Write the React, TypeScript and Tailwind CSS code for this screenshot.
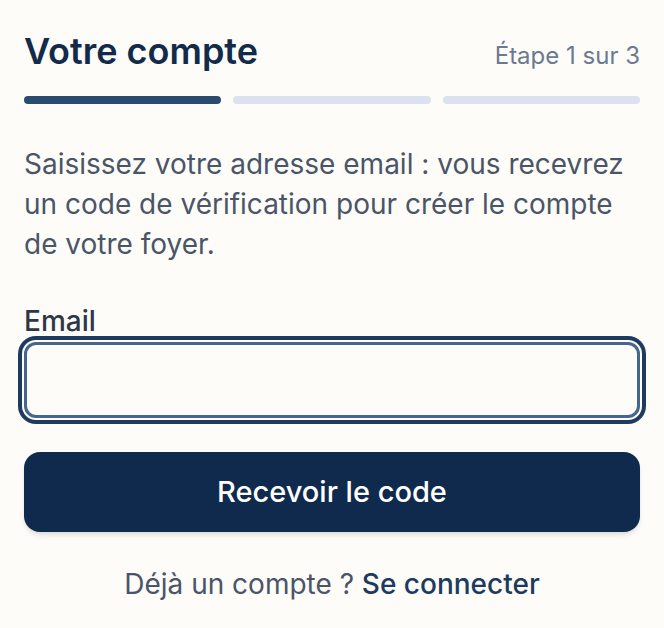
export default function App() {
  return (
    <div className="min-h-screen bg-[#fdfcf8] font-['Inter',sans-serif]">
      <div className="flex flex-col px-6 pt-[31px]">
        <div className="flex items-baseline justify-between">
          <h1 className="text-[36px] font-semibold leading-[41px] text-[#132b4b]">
            Votre compte
          </h1>
          <span className="text-[24px] text-[#6b7a8f]">Étape 1 sur 3</span>
        </div>

        <div className="mt-[22px] grid grid-cols-3 gap-3">
          <div className="h-2 rounded-full bg-[#2a4a70]" />
          <div className="h-2 rounded-full bg-[#dbe1ee]" />
          <div className="h-2 rounded-full bg-[#dbe1ee]" />
        </div>

        <p className="mt-[40px] text-[28px] leading-[40px] text-[#4a5568]">
          Saisissez votre adresse email : vous recevrez un code de vérification
          pour créer le compte de votre foyer.
        </p>

        <label className="mt-[41px] text-[28px] font-medium leading-[32px] text-[#2d3748]">
          Email
        </label>
        <input
          type="email"
          className="mt-[5px] h-[76px] w-full rounded-xl border-[3px] border-[#46668f] bg-[#fdfcf8] px-4 text-[28px] outline-none ring-4 ring-[#1e3a5f] ring-offset-2 ring-offset-[#fdfcf8]"
        />

        <button className="mt-[34px] h-[80px] w-full rounded-2xl bg-[#0f2a4d] text-[29px] font-medium text-white shadow-md">
          Recevoir le code
        </button>

        <p className="mt-[36px] text-center text-[28px] leading-[32px] text-[#4a5568]">
          Déjà un compte ?{" "}
          <a href="#" className="font-medium text-[#1e3a5f]">
            Se connecter
          </a>
        </p>
      </div>
    </div>
  );
}
